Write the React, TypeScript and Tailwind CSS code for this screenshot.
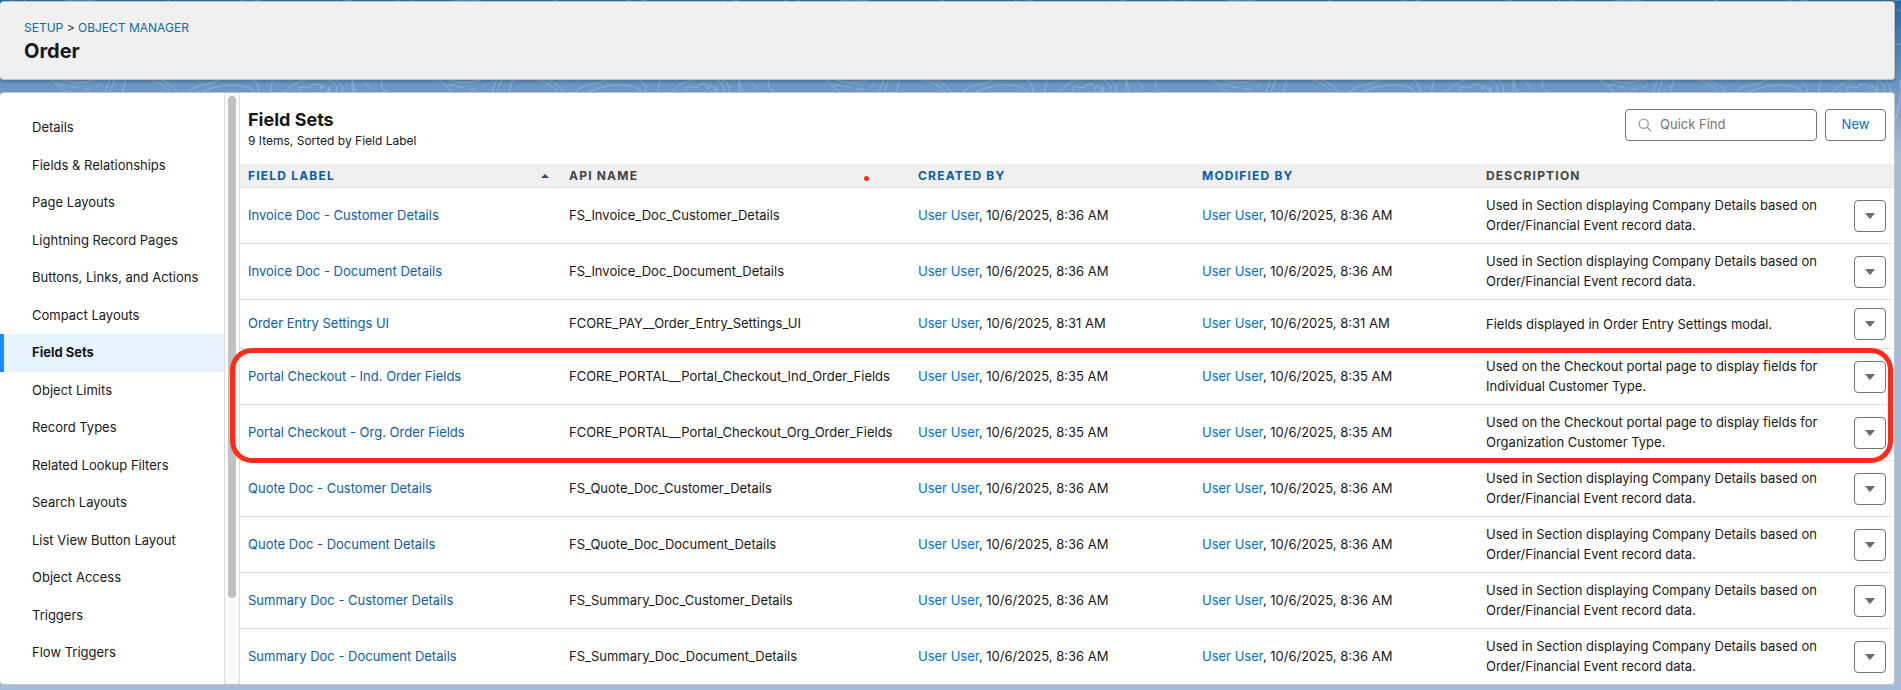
import { useState } from "react";

const navItems = [
  "Details",
  "Fields & Relationships",
  "Page Layouts",
  "Lightning Record Pages",
  "Buttons, Links, and Actions",
  "Compact Layouts",
  "Field Sets",
  "Object Limits",
  "Record Types",
  "Related Lookup Filters",
  "Search Layouts",
  "List View Button Layout",
  "Object Access",
  "Triggers",
  "Flow Triggers",
];

const SECTION = "Used in Section displaying Company Details based on Order/Financial Event record data.";

const fieldSets = [
  { label: "Invoice Doc - Customer Details", api: "FS_Invoice_Doc_Customer_Details", time: "8:36 AM", desc: SECTION },
  { label: "Invoice Doc - Document Details", api: "FS_Invoice_Doc_Document_Details", time: "8:36 AM", desc: SECTION },
  {
    label: "Order Entry Settings UI",
    api: "FCORE_PAY__Order_Entry_Settings_UI",
    time: "8:31 AM",
    desc: "Fields displayed in Order Entry Settings modal.",
  },
  {
    label: "Portal Checkout - Ind. Order Fields",
    api: "FCORE_PORTAL__Portal_Checkout_Ind_Order_Fields",
    time: "8:35 AM",
    desc: "Used on the Checkout portal page to display fields for Individual Customer Type.",
  },
  {
    label: "Portal Checkout - Org. Order Fields",
    api: "FCORE_PORTAL__Portal_Checkout_Org_Order_Fields",
    time: "8:35 AM",
    desc: "Used on the Checkout portal page to display fields for Organization Customer Type.",
  },
  { label: "Quote Doc - Customer Details", api: "FS_Quote_Doc_Customer_Details", time: "8:36 AM", desc: SECTION },
  { label: "Quote Doc - Document Details", api: "FS_Quote_Doc_Document_Details", time: "8:36 AM", desc: SECTION },
  { label: "Summary Doc - Customer Details", api: "FS_Summary_Doc_Customer_Details", time: "8:36 AM", desc: SECTION },
  { label: "Summary Doc - Document Details", api: "FS_Summary_Doc_Document_Details", time: "8:36 AM", desc: SECTION },
];

// contour lines behind the cards
function Contours() {
  return (
    <svg className="absolute inset-x-0 top-0 w-full h-40" fill="none" stroke="#ffffff" strokeOpacity="0.25" aria-hidden="true">
      <defs>
        <pattern id="contours" width="387" height="160" patternUnits="userSpaceOnUse">
          <path d="M52 80 66 92M60 85h8M70 86l7 2M83 89h7M96 88l4-5M62 80q16 5 32 0M105 92l6-16M110 92l6-16M122 92l5-16" />
          <path d="M156 78q18 6 22 16M147 78q19 6 25 16" />
          <path d="M188 92q8-7 20-8l22-8M202 92q14-7 30-7 18 0 22 7" />
          <path d="M244 76q16 4 15 17M276 76q-6 9-5 16M284 92q14-14 34-14 20 0 19 14" />
          <path d="M301 92q-6-6 2-5 10 2 8-2 10-3 10 4l2-4 6 7v-5l2 3M332 78q12 4 10 14M352 80l4 12M364 81l6 8M382 78q-3 10 5 14" />
          <path d="M10 0q8 4 16 0M60 2q20-4 40 0M160 3l10-3M240 0q6 3 20 0M340 2l12-2" />
          <path d="M336 0q6 10 22 12M342 50q8-10 16-4M344 128q10-20 8-48" />
        </pattern>
      </defs>
      <rect width="100%" height="100%" stroke="none" fill="url(#contours)" />
    </svg>
  );
}

function PersonStamp({ time }: { time: string }) {
  return (
    <td className="px-2">
      <a href="#" className="text-[#0070d2]">User User</a>, 10/6/2025, {time}
    </td>
  );
}

export default function App() {
  const [query, setQuery] = useState("");

  return (
    <div className="relative min-h-screen flex flex-col gap-3 pt-px pr-1.5 pb-[5px] bg-[#a4bbdb] bg-[linear-gradient(#2467a3_0px,#a4bbdb_155px)] font-[Inter,'Liberation_Sans',sans-serif] text-[13px] text-[#181818]">
      <Contours />

      <header className="relative rounded border border-l-0 border-[#c2c2c2] bg-[#f0f0f0] shadow-[0_2px_3px_rgba(0,0,0,0.2)] px-6 py-4">
        <nav aria-label="Breadcrumb" className="text-xs leading-5">
          <a href="#" className="text-[#0b6aa8]">SETUP</a> &gt; <a href="#" className="text-[#0b6aa8]">OBJECT MANAGER</a>
        </nav>
        <h1 className="mt-px text-xl leading-6 font-bold">Order</h1>
      </header>

      <div className="relative grow flex rounded border border-l-0 border-[#c2c2c2] bg-white">
        <nav aria-label="Order setup" className="w-56 shrink-0 flex flex-col pt-4 pb-3">
          {navItems.map((item) => (
            <a
              key={item}
              href="#"
              className={
                item === "Field Sets"
                  ? "grow flex items-center pl-7 border-l-4 border-[#1b8aff] bg-[#e8f3fe] font-bold"
                  : "grow flex items-center pl-8"
              }
            >
              {item}
            </a>
          ))}
        </nav>

        {/* scrollbar */}
        <div className="w-4 shrink-0 border-x border-[#dddddd] bg-[#fafafa] pt-[3px] px-[3px]">
          <div className="h-[502px] w-2 rounded-full bg-[#c1c1c1]" />
        </div>

        <main className="grow min-w-0">
          <div className="flex items-start justify-between pt-4 px-2 h-[71px]">
            <div className="flex flex-col gap-px pt-px">
              <h2 className="text-lg leading-5 font-bold">Field Sets</h2>
              <p className="text-xs leading-5">9 Items, Sorted by Field Label</p>
            </div>
            <div className="flex gap-2">
              <label className="flex items-center gap-2 w-48 h-8 rounded border border-[#747474] bg-white pl-3">
                <svg className="size-3.5 shrink-0" viewBox="0 0 14 14" fill="none" stroke="#a0a0a0" strokeWidth="1.4" aria-hidden="true">
                  <circle cx="5.7" cy="5.7" r="4.6" />
                  <path d="m9.2 9.2 4 4" />
                </svg>
                <input
                  type="text"
                  aria-label="Quick Find"
                  placeholder="Quick Find"
                  value={query}
                  onChange={(e) => setQuery(e.target.value)}
                  className="w-full min-w-0 outline-none placeholder:text-[#747474]"
                />
              </label>
              <button type="button" className="h-8 w-[61px] rounded border border-[#747474] bg-white text-[#0070d2]">New</button>
            </div>
          </div>

          <div className="relative">
            <table className="w-full table-fixed border-separate border-spacing-0 text-left [&_th]:border-b [&_td]:border-b [&_th]:border-[#dddddd] [&_td]:border-[#dddddd] [&_tr:last-child_td]:border-b-0">
              <colgroup>
                <col className="w-[321px]" />
                <col className="w-[349px]" />
                <col className="w-[284px]" />
                <col className="w-[284px]" />
                <col />
                <col className="w-12" />
              </colgroup>
              <thead>
                <tr className="h-6 bg-[#f0f0f0] text-xs tracking-widest text-[#0b5cab]">
                  <th className="px-2">
                    <span className="flex items-center justify-between pr-1">
                      FIELD LABEL
                      <svg className="w-2 h-1" viewBox="0 0 8 4" fill="#2f4a6b" aria-hidden="true">
                        <path d="M4 0 8 4H0z" />
                      </svg>
                    </span>
                  </th>
                  <th className="px-2 text-[#444444]">API NAME</th>
                  <th className="px-2">CREATED BY</th>
                  <th className="px-2">MODIFIED BY</th>
                  <th className="px-2 text-[#444444]">DESCRIPTION</th>
                  <th aria-label="Actions" />
                </tr>
              </thead>
              <tbody>
                {fieldSets.map((row) => (
                  <tr key={row.api} className="h-[49px]">
                    <td className="px-2">
                      <a href="#" className="text-[#0b5cab]">{row.label}</a>
                    </td>
                    <td className="px-2">{row.api}</td>
                    <PersonStamp time={row.time} />
                    <PersonStamp time={row.time} />
                    <td className="px-2 pt-[7px] pb-2 leading-5">{row.desc}</td>
                    <td className="pl-2">
                      <button type="button" aria-label={`Actions for ${row.label}`} className="flex items-center justify-center size-8 rounded border border-[#747474] bg-white">
                        <svg className="w-2.5 h-1.5" viewBox="0 0 10 6" fill="#706e6b" aria-hidden="true">
                          <path d="M0 0h10L5.6 5.6q-.6.6-1.2 0z" />
                        </svg>
                      </button>
                    </td>
                  </tr>
                ))}
              </tbody>
            </table>

            {/* red marker annotations */}
            <div className="absolute left-[624px] top-3 size-[5px] rounded-full bg-[#ff2a17]" />
            <div className="absolute -left-2.5 right-px top-[184px] h-[115px] rounded-[22px] border-5 border-[#ff2a17] pointer-events-none" />
          </div>
        </main>
      </div>
    </div>
  );
}
